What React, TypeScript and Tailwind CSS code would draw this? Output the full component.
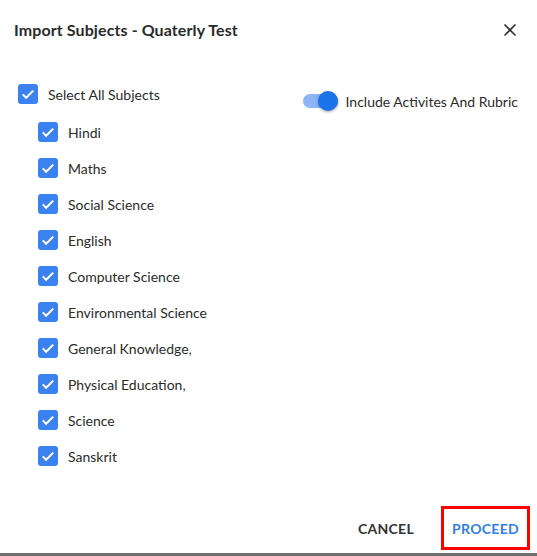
import { X } from "lucide-react";

const subjects = [
  "Hindi",
  "Maths",
  "Social Science",
  "English",
  "Computer Science",
  "Environmental Science",
  "General Knowledge,",
  "Physical Education,",
  "Science",
  "Sanskrit",
];

function Check() {
  return (
    <span className="flex items-center justify-center w-5 h-5 rounded-[3px] bg-[#3b82f0] shrink-0">
      <svg viewBox="0 0 24 24" className="w-[18px] h-[18px]" fill="none" stroke="white" strokeWidth={2.8}>
        <path d="M5 12.5l4.5 4.5L19 7.5" />
      </svg>
    </span>
  );
}

export default function App() {
  return (
    <div className="w-[537px] h-[556px] bg-white flex flex-col text-[#2b2b2b] font-['Lato',sans-serif] border-b-[3px] border-[#6e6e6e]">
      <div className="flex items-center justify-between pl-[14px] pr-[17px] pt-[18px] pb-[21px]">
        <h2 className="text-[16px] font-bold tracking-[0.1px]">Import Subjects - Quaterly Test</h2>
        <X size={20} strokeWidth={2} className="text-[#333]" />
      </div>

      <div className="flex justify-between pl-[18px] pr-[19px] pt-[21px]">
        <div className="flex flex-col">
          <label className="flex items-center gap-[10px] h-5 text-[14px]">
            <Check />
            Select All Subjects
          </label>
          <div className="flex flex-col gap-4 pl-5 pt-[18px]">
            {subjects.map((s) => (
              <label key={s} className="flex items-center gap-[10px] h-5 text-[14px]">
                <Check />
                {s}
              </label>
            ))}
          </div>
        </div>
        <div className="flex items-center gap-2 h-5 mt-[7px] text-[14px]">
          <span className="relative w-[35px] h-[14px]">
            <span className="absolute inset-0 rounded-full bg-[#8db4f5]" />
            <span className="absolute right-0 -top-[3px] w-5 h-5 rounded-full bg-[#1a73e8] shadow-[0_1px_3px_rgba(0,0,0,0.35)]" />
          </span>
          Include Activites And Rubric
        </div>
      </div>

      <div className="mt-auto flex items-center justify-end gap-[27px] pr-[7px] pb-[3px]">
        <button className="text-[14px] font-bold text-[#333] tracking-[0.3px]">CANCEL</button>
        <button className="border-[3px] border-[#ff0000] px-[8px] h-[44px] text-[14px] font-bold text-[#2f80e8] tracking-[0.3px]">
          PROCEED
        </button>
      </div>
    </div>
  );
}
